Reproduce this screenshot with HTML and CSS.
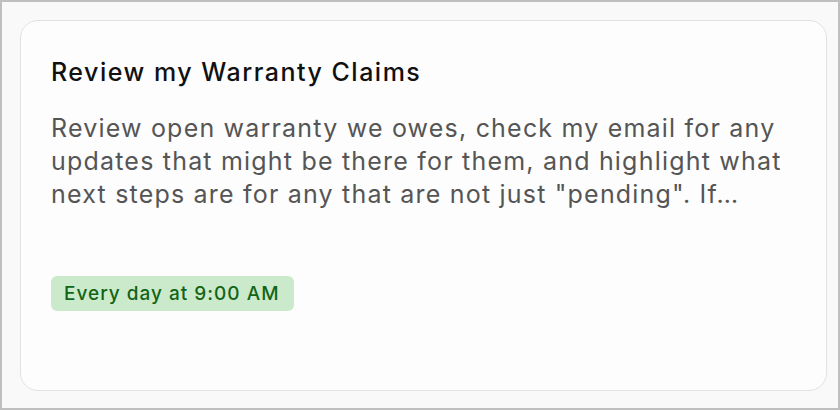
FILE: index.html
```html
<!DOCTYPE html>
<html>
<head>
<meta charset="utf-8">
<link rel="stylesheet" href="styles.css">
</head>
<body>
<div class="frame">
  <div class="card">
    <h2 class="title">Review my Warranty Claims</h2>
    <p class="desc">Review open warranty we owes, check my email for any updates that might be there for them, and highlight what next steps are for any that are not just "pending". If…</p>
    <span class="badge">Every day at 9:00 AM</span>
  </div>
</div>
</body>
</html>
```
FILE: styles.css
```css
html, body { margin: 0; padding: 0; }
body { font-family: Inter, "Noto Sans", sans-serif; }
.frame {
  width: 840px;
  height: 410px;
  box-sizing: border-box;
  border: 2px solid #bfbfbf;
  background: #f9f9f9;
  padding: 18px 11px 17px 18px;
}
.card {
  height: 100%;
  box-sizing: border-box;
  background: #fdfdfd;
  border: 1.5px solid #e2e2e2;
  border-radius: 18px;
  padding: 35.5px 30px 20px 30px;
  display: flex;
  flex-direction: column;
  align-items: flex-start;
}
.title {
  margin: 0;
  font-size: 25px;
  font-weight: 500;
  letter-spacing: 1.5px;
  color: #111;
  line-height: 30px;
}
.desc {
  margin: 25.5px 0 0 0;
  font-size: 25px;
  letter-spacing: 1.2px;
  line-height: 33px;
  color: #555;
}
.badge {
  margin-top: 64.5px;
  background: #cbeacb;
  color: #136417;
  font-size: 19px;
  font-weight: 500;
  letter-spacing: 1px;
  line-height: 35px;
  padding: 0 14px 0 13px;
  border-radius: 6px;
}
```
